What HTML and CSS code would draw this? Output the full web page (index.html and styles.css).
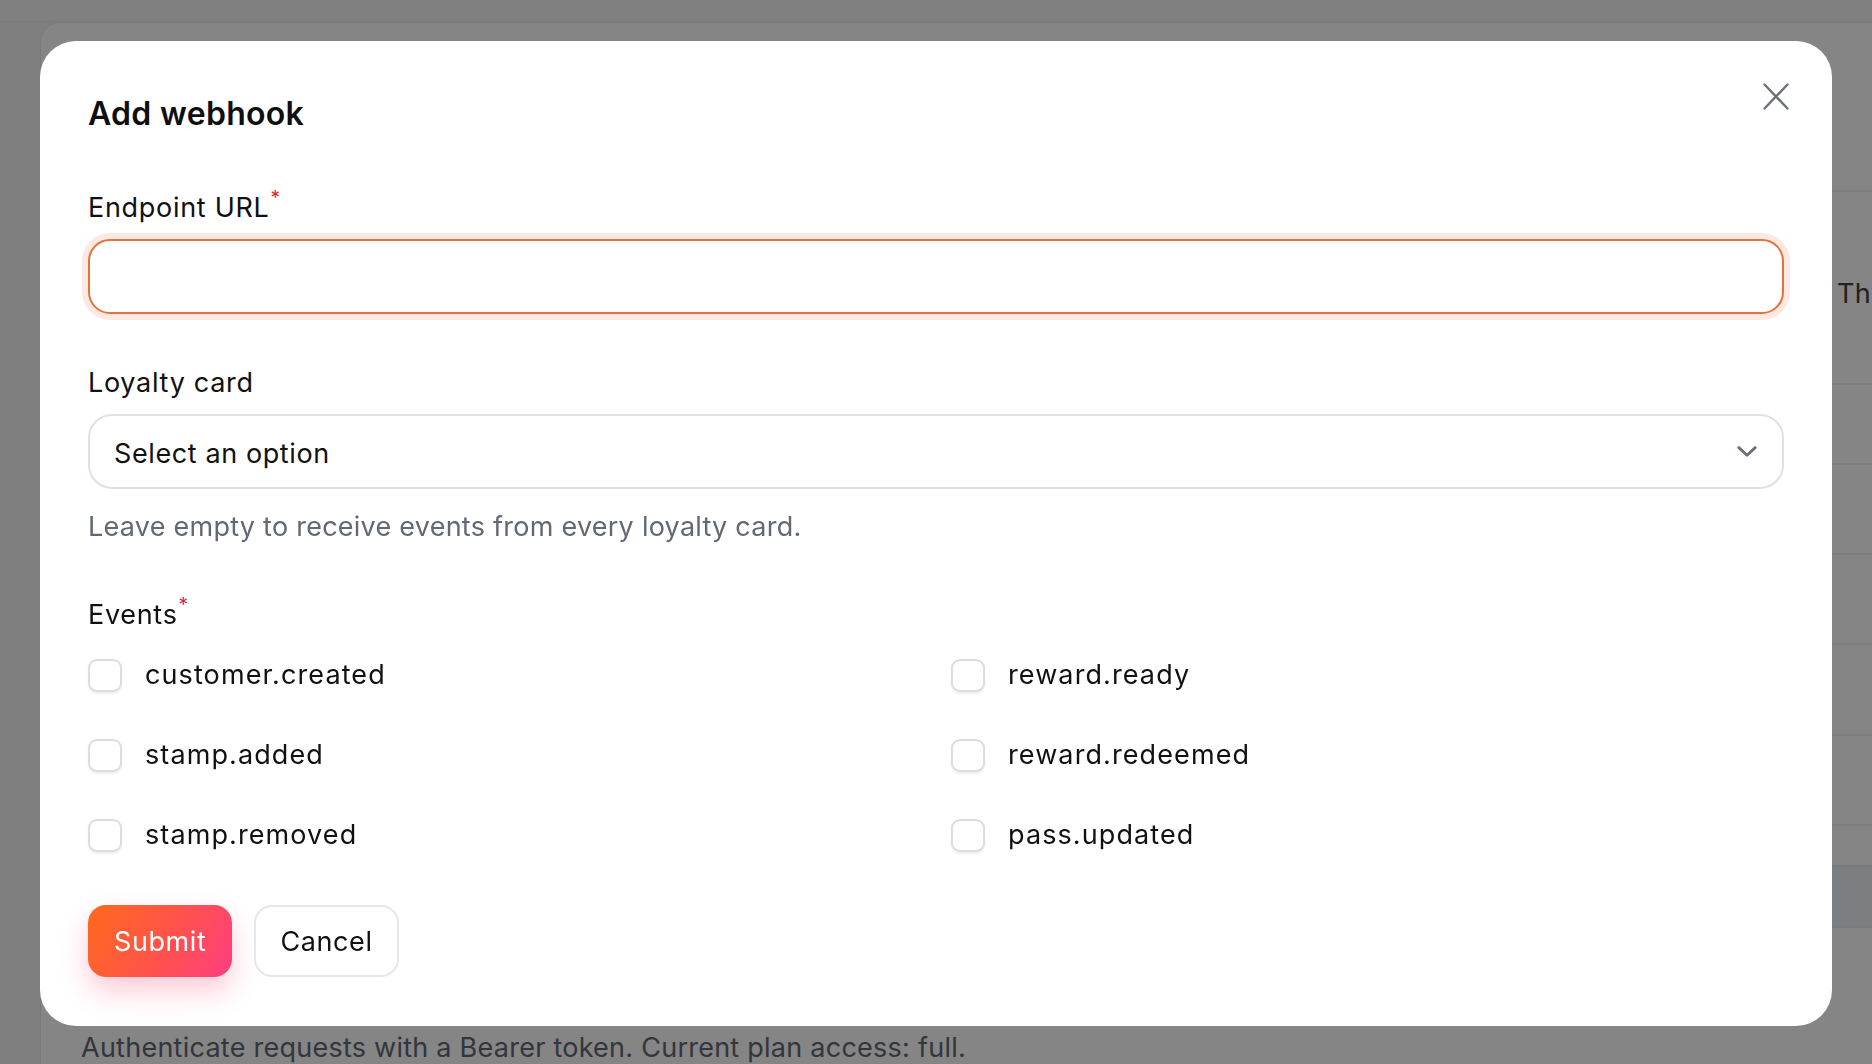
FILE: index.html
```html
<!DOCTYPE html>
<html lang="en">
<head>
<meta charset="utf-8">
<title>Webhooks</title>
<link rel="stylesheet" href="styles.css">
</head>
<body>
<div class="page">
  <div class="topbar"></div>
  <div class="main">
    <div class="card">
      <div class="row row-head"></div>
      <div class="row row-secret"><span></span><span class="cell">The signing secret is shown only once.</span></div>
      <div class="row r80"></div>
      <div class="row r90"></div>
      <div class="row r90"></div>
      <div class="row r91"></div>
      <div class="row r90"></div>
      <div class="row r41"></div>
      <div class="row r61 row-info"></div>
      <div class="row row-last">
        <p class="hint card-note">Authenticate requests with a Bearer token. Current plan access: full.</p>
      </div>
    </div>
  </div>
</div>

<div class="overlay"></div>

<div class="modal">
  <h2 class="modal-title">Add webhook</h2>
  <button class="close" type="button" aria-label="Close">
    <svg width="26" height="27" viewBox="0 0 26 27"><path d="M1.5 1.5L24.5 25.5M24.5 1.5L1.5 25.5" stroke="#6b7079" stroke-width="2.4" stroke-linecap="round" fill="none"/></svg>
  </button>

  <form class="form">
    <div class="field">
      <label class="field-label">Endpoint URL<span class="req">*</span></label>
      <input class="text-input is-focus" type="text">
    </div>

    <div class="field">
      <label class="field-label">Loyalty card</label>
      <div class="select">
        <span>Select an option</span>
        <svg width="20" height="11" viewBox="0 0 20 11"><path d="M1.8 1.6L10 9.2L18.2 1.6" stroke="#6b7079" stroke-width="2.8" stroke-linecap="round" stroke-linejoin="round" fill="none"/></svg>
      </div>
      <p class="hint hint-field">Leave empty to receive events from every loyalty card.</p>
    </div>

    <div class="field">
      <label class="field-label">Events<span class="req">*</span></label>
      <div class="checks">
        <label class="check"><span class="box"></span>customer.created</label>
        <label class="check"><span class="box"></span>reward.ready</label>
        <label class="check"><span class="box"></span>stamp.added</label>
        <label class="check"><span class="box"></span>reward.redeemed</label>
        <label class="check"><span class="box"></span>stamp.removed</label>
        <label class="check"><span class="box"></span>pass.updated</label>
      </div>
    </div>

    <div class="actions">
      <button class="btn btn-primary" type="button">Submit</button>
      <button class="btn btn-secondary" type="button">Cancel</button>
    </div>
  </form>
</div>
</body>
</html>
```

FILE: styles.css
```css
*{box-sizing:border-box;}
html,body{margin:0;padding:0;}
body{width:1872px;height:1064px;overflow:hidden;background:#f3f4f6;font-family:"Inter","Liberation Sans",sans-serif;color:#111;}
p,h2{margin:0;}

/* page behind the dialog */
.page{height:1064px;}
.topbar{height:22px;border-bottom:1px solid #ebecef;background:#f6f6f7;}
.main{padding-left:40px;overflow:hidden;height:1042px;}
.card{width:2400px;height:1100px;background:#fff;border:1px solid #e8e9ec;border-radius:20px 0 0 0;}
.row{border-top:2px solid #f0f0f2;}
.row:first-child{border-top:0;}
.row-head{height:167px;}
.row-secret{height:193px;display:grid;grid-template-columns:1796px 1fr;align-items:center;padding-top:12px;}
.cell{font-size:27px;color:#404040;letter-spacing:0.3px;}
.r80{height:80px;}
.r90{height:90px;}
.r91{height:91px;}
.r41{height:41px;}
.r61{height:61px;}
.row-info{background:#eef3fa;border-top-color:#e4e7ec;}
.row-last{padding:102px 0 0 40px;border-top-color:#ececee;}

.overlay{position:fixed;inset:0;background:rgba(0,0,0,0.48);}

/* dialog */
.modal{position:fixed;left:40px;top:41px;width:1792px;padding:49px 48px 49px;background:#fff;border-radius:36px;}
.modal-title{font-size:32px;line-height:48px;font-weight:600;color:#0f0f10;letter-spacing:0.3px;}
.close{position:absolute;top:42px;right:43px;width:26px;height:27px;padding:0;border:0;background:none;display:flex;}

.form{margin-top:50px;display:flex;flex-direction:column;gap:49px;}
.field{display:flex;flex-direction:column;}
.field-label{font-size:27px;line-height:40px;color:#111;margin-bottom:11px;letter-spacing:0.7px;}
.req{color:#e0202e;font-size:19px;vertical-align:13px;margin-left:1px;line-height:1;}

.text-input{display:block;width:100%;height:75px;border:2px solid #e2733f;border-radius:22px;box-shadow:0 0 0 6px #fde9e1;outline:none;background:#fff;font:inherit;}

.select{display:flex;align-items:center;justify-content:space-between;height:75px;padding:4px 25px 0 24px;border:2px solid #dde1e8;border-radius:24px;font-size:27px;color:#111;letter-spacing:0.6px;}
.select svg{margin-top:-4px;}
.hint{font-size:27px;line-height:36px;color:#626874;letter-spacing:0.25px;}
.hint-field{margin:20px 0 1px;}

.checks{display:grid;grid-template-columns:1fr 1fr;column-gap:30px;row-gap:40px;margin-top:9px;}
.check{display:flex;align-items:center;gap:23px;font-size:27px;line-height:40px;color:#111;letter-spacing:1.1px;}
.box{flex:none;width:34px;height:33px;border:2px solid #dcdde0;border-radius:9px;background:#fff;box-shadow:0 2px 2px rgba(0,0,0,0.07);}

.actions{display:flex;gap:22px;margin-top:1px;}
.btn{height:72px;padding:0 26px;font:inherit;font-size:27px;border-radius:18px;cursor:pointer;letter-spacing:0.6px;}
.btn-primary{border:0;color:#fff;background:linear-gradient(120deg,#ff6a1c 0%,#ff5448 50%,#ff3d80 100%);box-shadow:0 14px 28px rgba(255,70,110,0.28);}
.btn-secondary{padding:0 24px;border:2px solid #e6e7ea;background:#fff;color:#111;}
```
